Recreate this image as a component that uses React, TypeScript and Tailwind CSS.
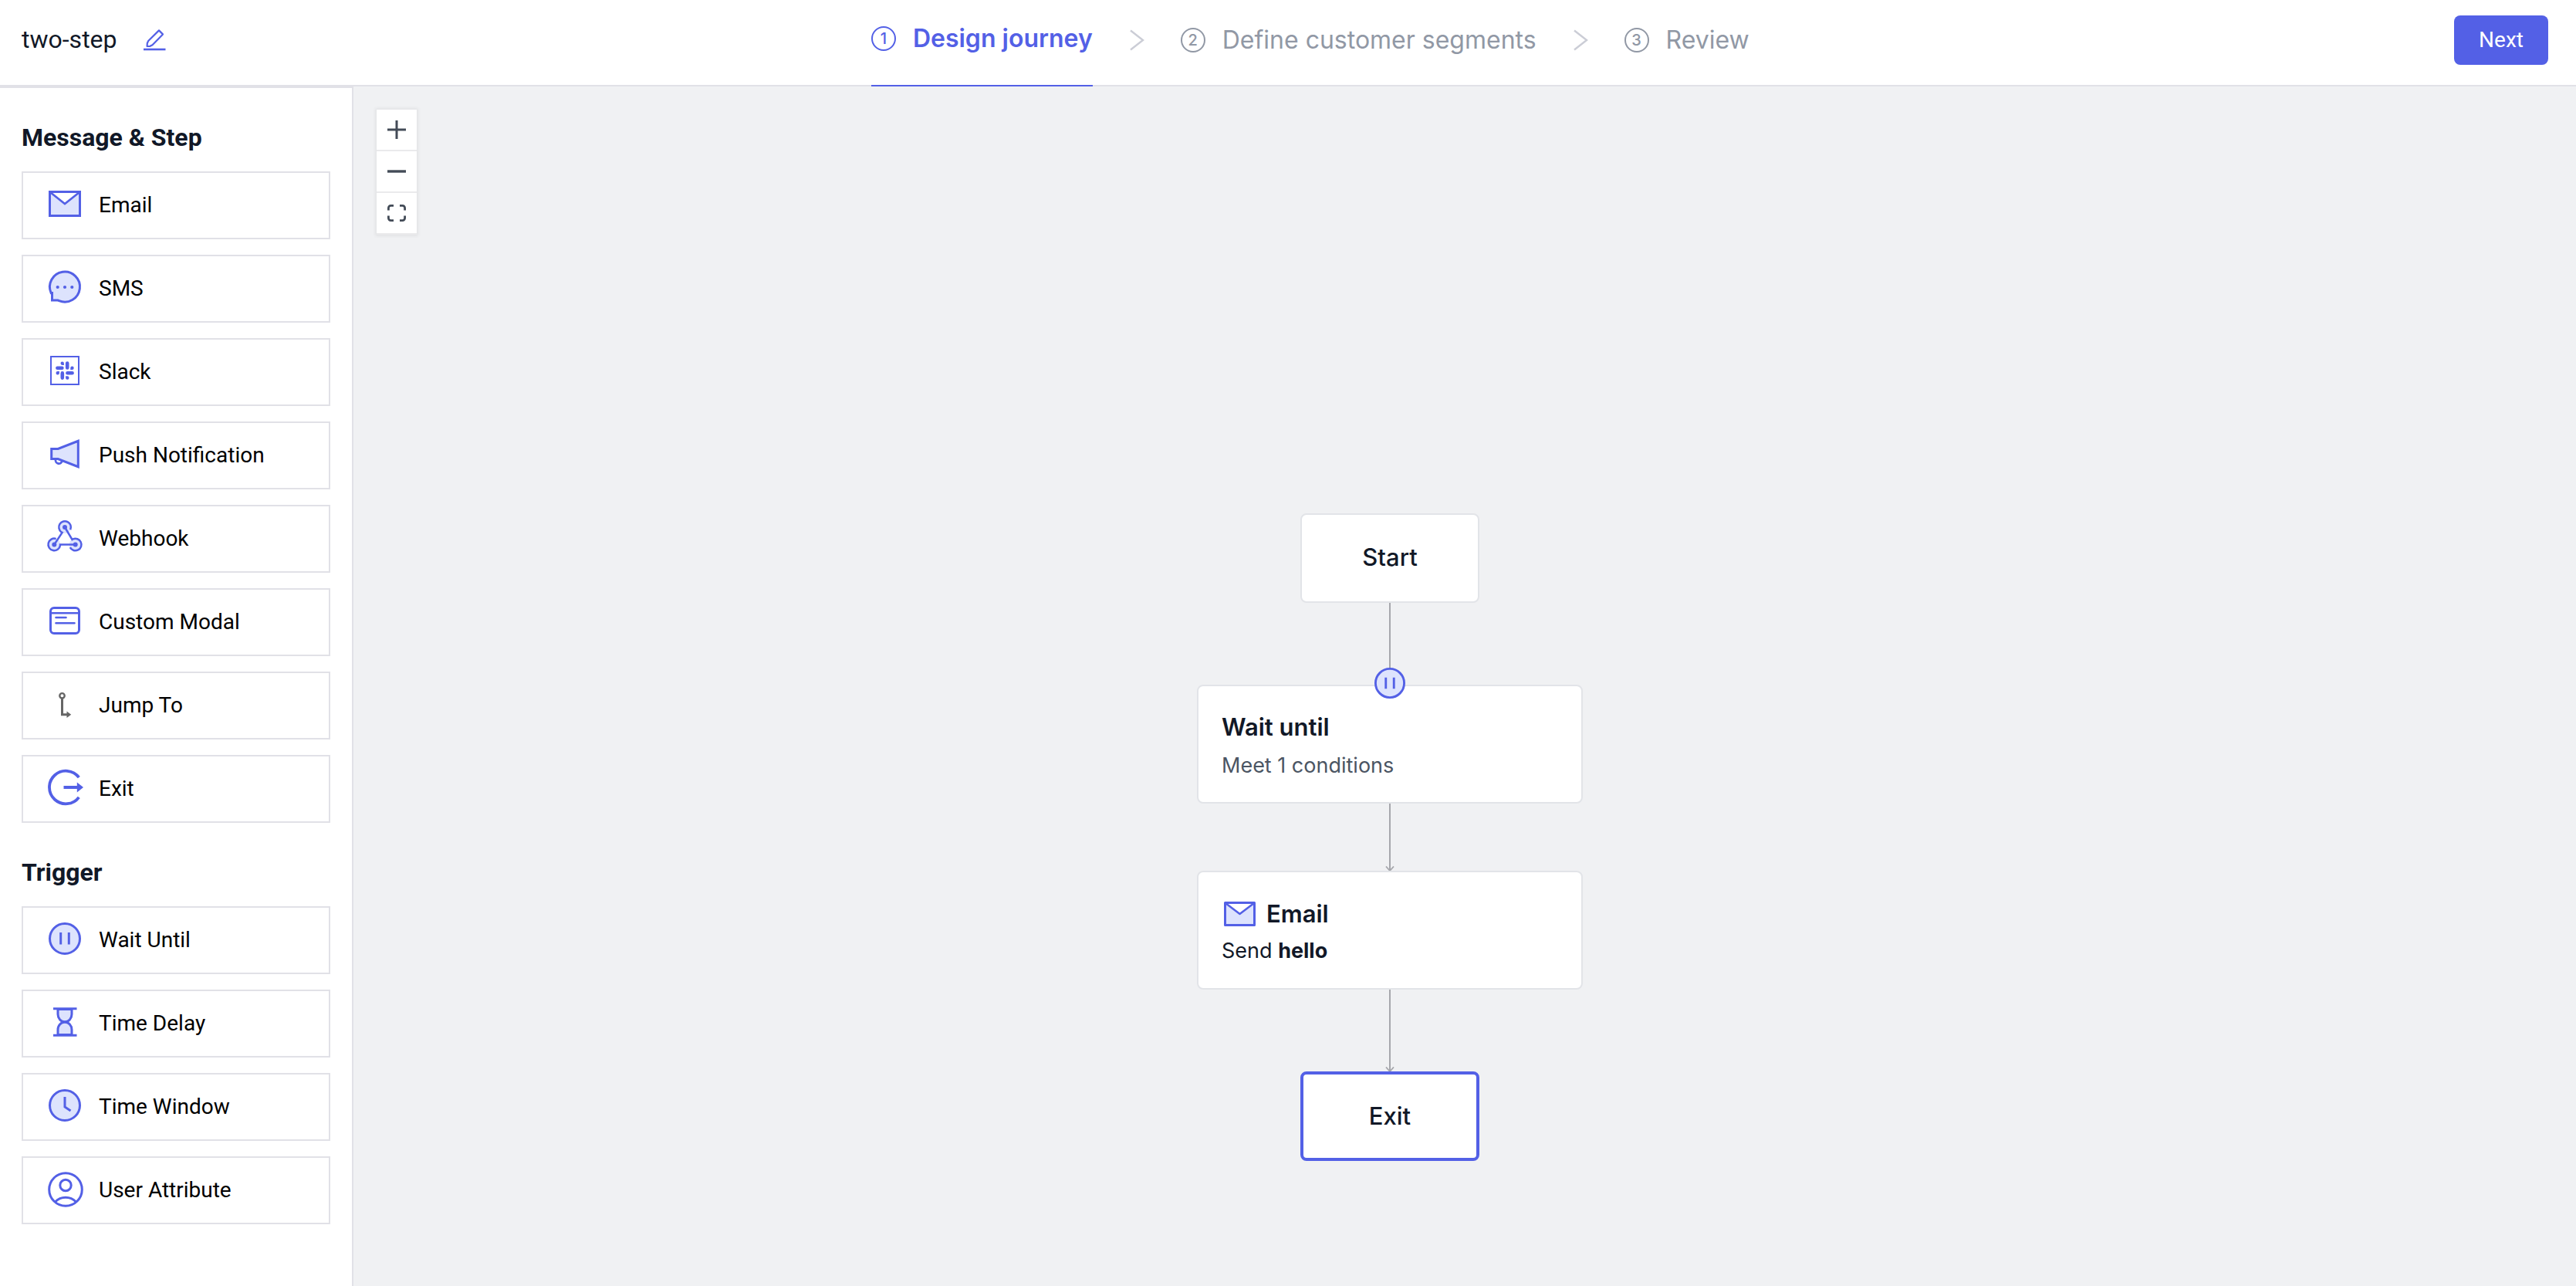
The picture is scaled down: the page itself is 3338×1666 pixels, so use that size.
import React from "react";

const INDIGO = "#5360E6";
const TINT = "#DDE3FD";

function PencilIcon() {
  return (
    <svg width="32" height="32" viewBox="0 0 32 32" fill="none" stroke={INDIGO} strokeWidth="2.200" aria-hidden="true">
      <path d="M22 4.400 27 9.400 13.500 23.200 10.500 24.800 6.600 25 6.800 21 8.200 18z" strokeLinejoin="round" />
      <path d="M2 29h28.500" strokeWidth="2.600" />
    </svg>
  );
}

function EmailIcon() {
  return (
    <svg width="41" height="32" viewBox="0 0 41 32" fill="none" stroke={INDIGO} strokeWidth="3" strokeLinejoin="round" aria-hidden="true">
      <path d="M1.500 1.500h38v29h-38z" fill={TINT} />
      <path d="M2.500 2.500h36l-18 13.500z" fill="#fff" stroke="none" />
      <path d="M1.500 1.500h38" />
      <path d="M2 2l18.500 14L39 2" strokeWidth="2.600" />
    </svg>
  );
}

function PauseIcon({ size }: { size: number }) {
  return (
    <svg width={size} height={size} viewBox="0 0 42 42" fill="none" stroke={INDIGO} strokeWidth="3" aria-hidden="true">
      <circle cx="21" cy="21" r="19.500" fill={TINT} />
      <path d="M15.500 13.500v15M26.500 13.500v15" />
    </svg>
  );
}

/* Palette icons share a 48×48 box centred on (24, 24). */
function Glyph({ children, stroke = INDIGO }: { children: React.ReactNode; stroke?: string }) {
  return (
    <svg className="mb-1" width="48" height="48" viewBox="0 0 48 48" fill="none" stroke={stroke} strokeWidth="3" aria-hidden="true">
      {children}
    </svg>
  );
}

const icons = {
  email: (
    <Glyph>
      <path d="M4.500 8.500h39v31h-39z" fill={TINT} />
      <path d="M5.500 9h37L24 24z" fill="#fff" stroke="none" />
      <path d="M4.500 8.500h39v31h-39z" strokeLinejoin="round" />
      <path d="M5 9l19 15L43 9" strokeWidth="2.600" />
    </Glyph>
  ),
  sms: (
    <Glyph>
      <path d="M7.500 32.800A19.500 19.500 0 1 1 17.500 41.400H7.500z" fill={TINT} stroke="none" />
      <path d="M6.200 31.600A19.500 19.500 0 1 1 16.500 41.600L15 41H7.500V31.500z" />
      <g fill={INDIGO} stroke="none">
        <circle cx="14.700" cy="24" r="2.100" />
        <circle cx="24" cy="24" r="2.100" />
        <circle cx="33.300" cy="24" r="2.100" />
      </g>
    </Glyph>
  ),
  slack: (
    <Glyph>
      <path d="M6 6h36v36H6z" strokeWidth="2" />
      <g strokeWidth="4.600" strokeLinecap="round">
        <path d="M27.200 14.600v5.800M14.400 20.800h6M20.800 27.400v6.200M27.400 27.200h6.200" />
      </g>
      <g fill={INDIGO} stroke="none">
        <path d="M22.900 16.900h-2.100a2.200 2.200 0 1 1 2.100-2.200z" />
        <path d="M31.300 22.900v-2.100a2.200 2.200 0 1 1 2.200 2.100z" />
        <path d="M16.900 25.100v2.100a2.200 2.200 0 1 1-2.200-2.100z" />
        <path d="M25.100 31.300h2.100a2.200 2.200 0 1 1-2.100 2.200z" />
      </g>
    </Glyph>
  ),
  push: (
    <Glyph>
      <path d="M6.700 17.500h8.500L41.300 7.300v33.400L15.200 30.500H6.700z" fill={TINT} />
      <path d="M12 31.500a4.300 4.300 0 0 0 8.500 1.500" strokeWidth="2.800" />
    </Glyph>
  ),
  webhook: (
    <Glyph>
      <g fill={TINT} stroke="none">
        <circle cx="24" cy="11" r="8" />
        <circle cx="10.300" cy="33.500" r="8" />
        <circle cx="37.700" cy="33.500" r="8" />
      </g>
      <g strokeWidth="2.500">
        <path d="M31.200 14.200A7.800 7.800 0 1 0 19.600 17.400l1 .6L10.300 33.500" />
        <path d="M12.600 26A7.800 7.800 0 1 0 18 34.500v-1h19.700" />
        <path d="M30.800 37.200A7.800 7.800 0 1 0 34.500 26.400l-1 .6L24 11" />
      </g>
      <g fill={INDIGO} stroke="none">
        <circle cx="24" cy="11" r="3" />
        <circle cx="10.300" cy="33.500" r="3" />
        <circle cx="37.700" cy="33.500" r="3" />
      </g>
    </Glyph>
  ),
  modal: (
    <Glyph>
      <rect x="5.500" y="7.500" width="37" height="33" rx="4.500" />
      <path d="M6 14.200h36" strokeWidth="2.600" />
      <path d="M12.500 20h13M12.500 27.200h24" strokeWidth="2.600" strokeLinecap="round" />
    </Glyph>
  ),
  jump: (
    <Glyph stroke="#666">
      <circle cx="20.500" cy="13.300" r="3.200" strokeWidth="2.400" />
      <path d="M20.500 16.500v21.200H27" strokeWidth="3" />
      <path d="M26.500 33.400 32.200 37.700 26.500 42z" fill="#666" stroke="none" />
    </Glyph>
  ),
  exit: (
    <Glyph>
      <path d="M42.300 11.200A21.300 21.300 0 1 0 42.300 36.800" strokeWidth="3.800" />
      <path d="M22.500 24h18" strokeWidth="4" />
      <path d="M39.800 17.500 48 24l-8.200 6.500z" fill={INDIGO} stroke="none" />
    </Glyph>
  ),
  wait: (
    <Glyph>
      <circle cx="24" cy="24" r="19.500" fill={TINT} />
      <path d="M18.700 16v15.500M29.300 16v15.500" />
    </Glyph>
  ),
  delay: (
    <Glyph>
      <path d="M15 7.500v6.500c0 5.500 4 9.800 9 9.800s9-4.300 9-9.800V7.500z" fill={TINT} />
      <path d="M15 40.500V34c0-5.500 4-9.800 9-9.800s9 4.300 9 9.800v6.500z" fill={TINT} />
      <path d="M9 6.700h30.500M9 41.300h30.500" />
    </Glyph>
  ),
  clock: (
    <Glyph>
      <circle cx="24" cy="24" r="19.500" fill={TINT} />
      <path d="M24 13v13l7.500 5" />
    </Glyph>
  ),
  user: (
    <Glyph>
      <circle cx="25" cy="25" r="21.300" />
      <circle cx="25" cy="19.500" r="7.200" />
      <path d="M11.500 41a19 19 0 0 1 27 0" />
    </Glyph>
  ),
};

const groups: { title: string; items: { label: string; icon: React.ReactNode }[] }[] = [
  {
    title: "Message & Step",
    items: [
      { label: "Email", icon: icons.email },
      { label: "SMS", icon: icons.sms },
      { label: "Slack", icon: icons.slack },
      { label: "Push Notification", icon: icons.push },
      { label: "Webhook", icon: icons.webhook },
      { label: "Custom Modal", icon: icons.modal },
      { label: "Jump To", icon: icons.jump },
      { label: "Exit", icon: icons.exit },
    ],
  },
  {
    title: "Trigger",
    items: [
      { label: "Wait Until", icon: icons.wait },
      { label: "Time Delay", icon: icons.delay },
      { label: "Time Window", icon: icons.clock },
      { label: "User Attribute", icon: icons.user },
    ],
  },
];

function StepNumber({ value }: { value: number }) {
  return (
    <span className="flex size-8 items-center justify-center rounded-full border-2 border-current text-[20px] leading-none font-medium">
      {value}
    </span>
  );
}

function Chevron() {
  return (
    <svg width="114" height="32" viewBox="0 0 114 32" fill="none" stroke="#CBCDD6" strokeWidth="2.400" aria-hidden="true">
      <path d="M49 3.500 65 16 49 28.500" />
    </svg>
  );
}

function Step({ value, label, active = false }: { value: number; label: string; active?: boolean }) {
  return (
    <button
      type="button"
      aria-current={active ? "step" : undefined}
      className={
        active
          ? "flex h-full items-center gap-[22px] border-b-2 border-[#5360E6] pb-2.5 font-semibold text-[#5360E6]"
          : "flex h-full items-center gap-[22px] pb-2 text-[#9198A5]"
      }
    >
      <StepNumber value={value} />
      {label}
    </button>
  );
}

function Edge({ arrow = false, className }: { arrow?: boolean; className: string }) {
  return (
    <div className={`relative w-[2px] bg-[#A6A7AC] ${className}`}>
      {arrow && (
        <svg className="absolute bottom-0 left-1/2 -translate-x-1/2" width="12" height="6" viewBox="0 0 12 6" fill="none" stroke="#A6A7AC" strokeWidth="1.800" aria-hidden="true">
          <path d="M1 .5 6 6 11 .5" />
        </svg>
      )}
    </div>
  );
}

export default function App() {
  return (
    <div className="flex min-h-screen flex-col bg-[#F0F1F3] font-[Roboto,sans-serif]">
      <header className="flex h-28 items-stretch justify-between border-b-2 border-[#E1E1E7] bg-white pr-9 pl-7">
        <div className="flex items-center gap-8 pb-2">
          <h1 className="text-[32px] leading-10 text-[#111827]">two-step</h1>
          <button type="button" aria-label="Rename journey">
            <PencilIcon />
          </button>
        </div>
        <nav aria-label="Journey steps" className="-mb-[2px] flex items-center font-[Inter,sans-serif] text-[32px] leading-10">
          <Step value={1} label="Design journey" active />
          <span className="pb-2"><Chevron /></span>
          <Step value={2} label="Define customer segments" />
          <span className="pb-2"><Chevron /></span>
          <Step value={3} label="Review" />
        </nav>
        <div className="flex items-center pb-1.5">
          <button type="button" className="h-16 rounded-lg bg-[#5360E6] px-8 text-[28px] leading-10 text-white">
            Next
          </button>
        </div>
      </header>

      <div className="flex flex-1">
        <aside className="w-[458px] shrink-0 border-t-2 border-r-2 border-[#E1E1E7] bg-white px-7 pt-10 pb-10">
          {groups.map((group) => (
            <section key={group.title} className="mb-10">
              <h2 className="text-[32px] leading-12 font-bold text-[#111827]">{group.title}</h2>
              <ul className="mt-5 flex flex-col gap-5">
                {group.items.map((item) => (
                  <li key={item.label}>
                    <button type="button" className="flex h-[88px] w-full items-center gap-5 border-2 border-[#E1E1E7] px-[30px] text-[28px] leading-10 text-black">
                      {item.icon}
                      {item.label}
                    </button>
                  </li>
                ))}
              </ul>
            </section>
          ))}
        </aside>

        <main className="relative flex-1">
          <div className="absolute top-[30px] left-[30px] flex flex-col shadow-[0_0_4px_2px_rgba(0,0,0,0.06)]">
            <button type="button" aria-label="Zoom in" className="flex h-[54px] w-[52px] items-center justify-center border-b-2 border-[#EAEAEC] bg-white">
              <svg width="24" height="24" viewBox="0 0 24 24" stroke="#434B57" strokeWidth="3" aria-hidden="true">
                <path d="M0 12h24M12 0v24" />
              </svg>
            </button>
            <button type="button" aria-label="Zoom out" className="flex h-[54px] w-[52px] items-center justify-center border-b-2 border-[#EAEAEC] bg-white">
              <svg width="24" height="24" viewBox="0 0 24 24" stroke="#434B57" strokeWidth="3.400" aria-hidden="true">
                <path d="M0 12h24" />
              </svg>
            </button>
            <button type="button" aria-label="Fit view" className="flex h-[54px] w-[52px] items-center justify-center border-b-2 border-[#EAEAEC] bg-white">
              <svg width="24" height="24" viewBox="0 0 24 24" fill="none" stroke="#434B57" strokeWidth="2.800" aria-hidden="true">
                <path d="M1.400 8.500V5.400a3 3 0 0 1 3-3H8M16 2.400h3.600a3 3 0 0 1 3 3v3.100M22.600 15.500v3.100a3 3 0 0 1-3 3H16M8 21.600H4.400a3 3 0 0 1-3-3v-3.100" />
              </svg>
            </button>
          </div>

          <div className="absolute top-[553px] left-[1093px] flex w-[500px] flex-col items-center font-[Inter,sans-serif] text-[31px] leading-10 text-[#111827]">
            <div className="flex h-[116px] w-[232px] items-center justify-center rounded-lg border-2 border-[#E2E4E8] bg-white pb-0.5 font-medium">
              Start
            </div>
            <Edge className="h-[106px]" />
            <div className="relative h-[154px] w-full rounded-lg border-2 border-[#E2E4E8] bg-white px-[30px] pt-[29px]">
              <div className="absolute -top-6 left-1/2 -translate-x-1/2">
                <PauseIcon size={40} />
              </div>
              <h3 className="leading-12 font-semibold">Wait until</h3>
              <p className="mt-[2px] text-[27px] leading-12 text-[#4B5563]">Meet 1 conditions</p>
            </div>
            <Edge arrow className="h-[87px]" />
            <div className="h-[154px] w-full rounded-lg border-2 border-[#E2E4E8] bg-white px-[30px] pt-[30px]">
              <h3 className="flex items-center gap-3.5 leading-12 font-semibold">
                <span className="pl-[3px]"><EmailIcon /></span>
                Email
              </h3>
              <p className="text-[27px] leading-12">
                Send <strong className="font-bold">hello</strong>
              </p>
            </div>
            <Edge arrow className="h-[106px]" />
            <div className="flex h-[116px] w-[232px] items-center justify-center rounded-lg border-4 border-[#5360E6] bg-white font-medium">
              Exit
            </div>
          </div>
        </main>
      </div>
    </div>
  );
}
